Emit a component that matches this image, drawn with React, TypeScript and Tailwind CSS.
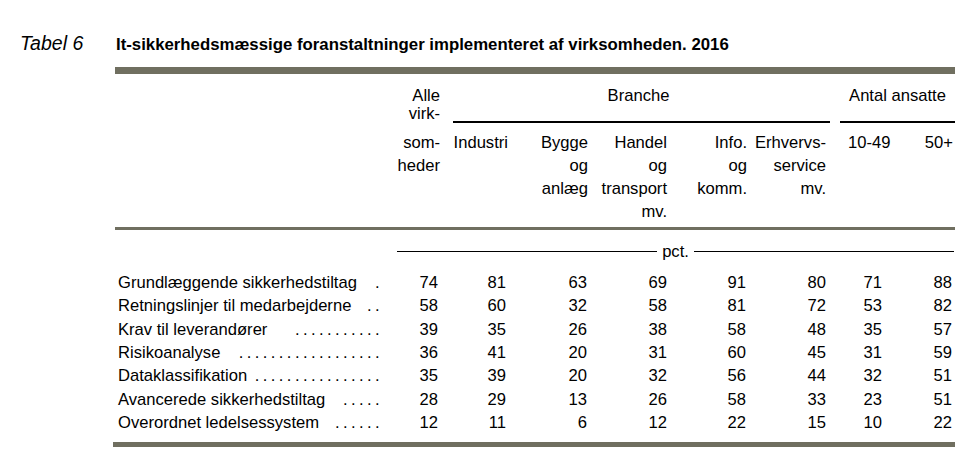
import * as React from "react";

const cols = "grid grid-cols-[265px_60px_67px_81px_80px_79px_80px_56px_72px]";

// right padding for each number column so the digits land on the printed right edge
const numPad = ["pr-[2px]", "pr-[1px]", "pr-[1px]", "pr-[1px]", "pr-[1px]", "pr-[1px]", "pr-[1px]", "pr-[3px]"];

const rows: { label: string; dots: number; values: number[] }[] = [
  { label: "Grundlæggende sikkerhedstiltag", dots: 1, values: [74, 81, 63, 69, 91, 80, 71, 88] },
  { label: "Retningslinjer til medarbejderne", dots: 2, values: [58, 60, 32, 58, 81, 72, 53, 82] },
  { label: "Krav til leverandører", dots: 11, values: [39, 35, 26, 38, 58, 48, 35, 57] },
  { label: "Risikoanalyse", dots: 18, values: [36, 41, 20, 31, 60, 45, 31, 59] },
  { label: "Dataklassifikation", dots: 16, values: [35, 39, 20, 32, 56, 44, 32, 51] },
  { label: "Avancerede sikkerhedstiltag", dots: 5, values: [28, 29, 13, 26, 58, 33, 23, 51] },
  { label: "Overordnet ledelsessystem", dots: 6, values: [12, 11, 6, 12, 22, 15, 10, 22] },
];

function Lines({ lines, className }: { lines: string[]; className?: string }) {
  return (
    <div className={className}>
      {lines.map((l, i) => (
        <div key={i}>{l}</div>
      ))}
    </div>
  );
}

export default function App() {
  return (
    <div className="w-[975px] h-[462px] overflow-hidden bg-white text-black font-['Liberation_Sans',Arial,sans-serif]">
      {/* Title */}
      <div className="flex items-baseline pt-[32px] leading-[23px]">
        <div className="w-[116px] pl-[20px] italic text-[19.5px]">Tabel 6</div>
        <div className="font-bold text-[16.8px]">
          It-sikkerhedsmæssige foranstaltninger implementeret af virksomheden. 2016
        </div>
      </div>

      <div className="ml-[115px] w-[840px] text-[16.6px]">
        <div className="mt-[11px] h-[7px] bg-[#706f60]" />

        {/* Column heads */}
        <div className={`${cols} grid-rows-[57px_auto]`}>
          <div />
          <Lines lines={["Alle", "virk-"]} className="pt-[13px] text-right leading-[18px]" />
          <div className="col-span-5 pt-[10px] leading-[23px]">
            <div className="text-center pl-[10px]">Branche</div>
            <div className="mt-[14px] h-[2px] bg-black ml-[13px] mr-[-3px]" />
          </div>
          <div className="col-span-2 pt-[10px] leading-[23px]">
            <div className="text-center pl-[13px]">Antal ansatte</div>
            <div className="mt-[14px] h-[2px] bg-black ml-[13px]" />
          </div>

          <div />
          <Lines lines={["som-", "heder"]} className="text-right leading-[23px]" />
          <Lines lines={["Industri"]} className="text-right leading-[23px] mr-[-1px]" />
          <Lines lines={["Bygge", "og", "anlæg"]} className="text-right leading-[23px]" />
          <Lines lines={["Handel", "og", "transport", "mv."]} className="text-right leading-[23px] pr-[1px]" />
          <Lines lines={["Info.", "og", "komm."]} className="text-right leading-[23px]" />
          <Lines lines={["Erhvervs-", "service", "mv."]} className="text-right leading-[23px] pr-[1px]" />
          <Lines lines={["10-49"]} className="pl-[21px] leading-[23px] whitespace-nowrap" />
          <Lines lines={["50+"]} className="text-right leading-[23px] pr-[2px]" />
        </div>

        <div className="mt-[4px] h-[3px] bg-[#706f60]" />

        {/* unit */}
        <div className="mt-[10px] ml-[282px] mr-[1px] h-[23px] flex items-center gap-[5px] leading-[23px]">
          <div className="flex-1 h-px bg-black" />
          <span>pct.</span>
          <div className="flex-1 h-px bg-black" />
        </div>

        {/* Body */}
        <div className="mt-[8px]">
          {rows.map((r) => (
            <div key={r.label} className={`${cols} leading-[23.33px]`}>
              <div className="flex justify-between pl-[3px] whitespace-nowrap">
                <span>{r.label}</span>
                <span className="tracking-[3.4px] mr-[-3px]">{".".repeat(r.dots)}</span>
              </div>
              {r.values.map((v, i) => (
                <div key={i} className={`text-right ${numPad[i]}`}>
                  {v}
                </div>
              ))}
            </div>
          ))}
        </div>

        <div className="mt-[8px] ml-[-2px] h-[5px] bg-[#706f60]" />
      </div>
    </div>
  );
}
